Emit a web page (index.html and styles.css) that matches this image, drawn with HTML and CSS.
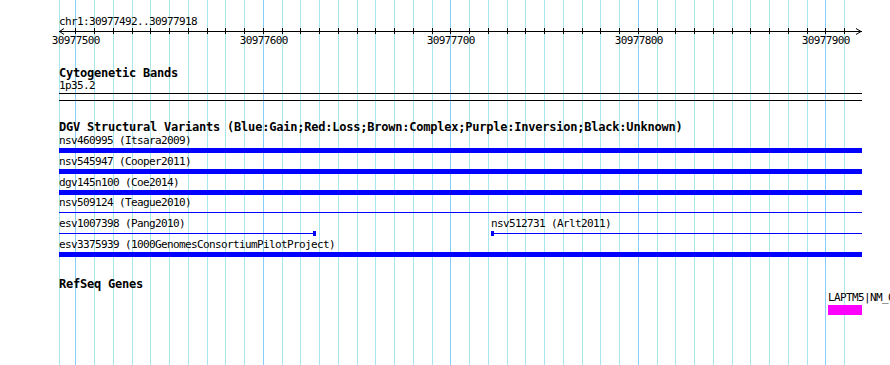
FILE: index.html
```html
<!DOCTYPE html>
<html lang="en">
<head>
    <meta charset="UTF-8">
    <title>chr1:30977492..30977918</title>
    <link rel="stylesheet" href="styles.css">
</head>
<body>
    <svg class="grid" id="grid" width="890" height="365"></svg>

    <div class="panel">
        <div class="locus">chr1:30977492..30977918</div>
        <svg class="ruler" id="ruler" width="803" height="22"></svg>

        <div class="track cyto">
            <div class="track-title">Cytogenetic Bands</div>
            <div class="band-label">1p35.2</div>
            <div class="band"></div>
        </div>

        <div class="track dgv">
            <div class="track-title">DGV Structural Variants (Blue:Gain;Red:Loss;Brown:Complex;Purple:Inversion;Black:Unknown)</div>
            <div class="row">
                <div class="feat" style="left: 0px; width: 803px;">
                    <div class="label">nsv460995 (Itsara2009)</div>
                    <div class="glyph"></div>
                </div>
            </div>
            <div class="row">
                <div class="feat" style="left: 0px; width: 803px;">
                    <div class="label">nsv545947 (Cooper2011)</div>
                    <div class="glyph"></div>
                </div>
            </div>
            <div class="row">
                <div class="feat" style="left: 0px; width: 803px;">
                    <div class="label">dgv145n100 (Coe2014)</div>
                    <div class="glyph"></div>
                </div>
            </div>
            <div class="row">
                <div class="feat" style="left: 0px; width: 803px;">
                    <div class="label">nsv509124 (Teague2010)</div>
                    <div class="glyph thin"></div>
                </div>
            </div>
            <div class="row">
                <div class="feat" style="left: 0px; width: 257px;">
                    <div class="label">esv1007398 (Pang2010)</div>
                    <div class="glyph thin end-right"><span class="block"></span></div>
                </div>
                <div class="feat" style="left: 432px; width: 371px;">
                    <div class="label">nsv512731 (Arlt2011)</div>
                    <div class="glyph thin"><span class="block"></span></div>
                </div>
            </div>
            <div class="row">
                <div class="feat" style="left: 0px; width: 803px;">
                    <div class="label">esv3375939 (1000GenomesConsortiumPilotProject)</div>
                    <div class="glyph"></div>
                </div>
            </div>
        </div>

        <div class="track refseq">
            <div class="track-title">RefSeq Genes</div>
            <div class="gene-row">
                <div class="feat" style="left: 769px; width: 34px;">
                    <div class="label">LAPTM5|NM_006762</div>
                    <div class="gene"></div>
                </div>
            </div>
        </div>
    </div>

    <script>
        const START = 30977492;
        const SCALE = 1.875;

        function bpToX(bp) {
            return Math.floor(60.8 + (bp - START) * SCALE);
        }

        let grid = '<line class="minor" x1="59.5" y1="0" x2="59.5" y2="365"></line>';
        let ruler = '';
        for (let bp = 30977500; bp <= 30977910; bp += 10) {
            const x = bpToX(bp);
            const major = (bp % 100) === 0;
            grid += '<line class="' + (major ? 'major' : 'minor') + '" x1="' + (x + 0.5) + '" y1="0" x2="' + (x + 0.5) + '" y2="365"></line>';
            const lx = x - 59 + 0.5;
            ruler += '<line x1="' + lx + '" y1="0" x2="' + lx + '" y2="6"></line>';
            if (major) {
                ruler += '<text class="tick-label" x="' + (lx + 0.3) + '" y="16">' + bp + '</text>';
            }
        }
        ruler += '<line x1="0" y1="3.5" x2="803" y2="3.5"></line>';
        ruler += '<polyline class="arrow" points="5,0.5 0.5,3.5 5,6.5"></polyline>';
        ruler += '<polyline class="arrow" points="797,0.5 802,3.5 797,6.5"></polyline>';

        document.getElementById('grid').innerHTML = grid;
        document.getElementById('ruler').innerHTML = ruler;
    </script>
</body>
</html>
```

FILE: styles.css
```css
html, body {
    margin: 0;
    padding: 0;
    overflow: hidden;
    background-color: #fff;
}
body {
    position: relative;
    width: 890px;
    height: 365px;
    font-family: "DejaVu Sans Mono", "Liberation Mono", monospace;
    font-size: 11px;
    letter-spacing: -0.62px;
    color: #000;
}
.grid {
    position: absolute;
    left: 0;
    top: 0;
    shape-rendering: crispEdges;
}
.grid .minor {
    stroke: #a8e6ef;
    stroke-width: 1;
}
.grid .major {
    stroke: #87cefa;
    stroke-width: 1;
}
.panel {
    position: relative;
    margin-left: 59px;
    width: 803px;
    padding-top: 15px;
}
.locus {
    height: 13px;
    line-height: 13px;
    white-space: nowrap;
}
.ruler {
    display: block;
    overflow: visible;
    shape-rendering: crispEdges;
}
.ruler line {
    stroke: #000;
    stroke-width: 1;
}
.ruler .arrow {
    fill: none;
    stroke: #000;
    stroke-width: 1;
    shape-rendering: auto;
}
.tick-label {
    font-family: "DejaVu Sans Mono", "Liberation Mono", monospace;
    font-size: 11px;
    letter-spacing: -0.62px;
    text-anchor: middle;
    fill: #000;
}
.track-title {
    font-weight: bold;
    font-size: 12px;
    letter-spacing: -0.22px;
    line-height: 13px;
    height: 13px;
    white-space: nowrap;
}
.cyto {
    margin-top: 17px;
}
.band-label {
    line-height: 11px;
    height: 11px;
}
.band {
    margin-top: 2px;
    height: 6px;
    border-top: 1px solid #000;
    border-bottom: 1px solid #000;
}
.dgv {
    margin-top: 20px;
}
.row {
    position: relative;
    height: 20.8px;
}
.feat {
    position: absolute;
    top: 0;
}
.label {
    height: 13px;
    line-height: 13px;
    white-space: nowrap;
}
.glyph {
    position: relative;
    margin-top: 1px;
    height: 5px;
    background-color: #0000ff;
}
.glyph.thin {
    background-color: transparent;
}
.glyph.thin::before {
    content: "";
    position: absolute;
    left: 0;
    right: 0;
    top: 2px;
    height: 1px;
    background-color: #0000ff;
}
.glyph .block {
    position: absolute;
    left: 0;
    top: 0;
    width: 3px;
    height: 5px;
    background-color: #0000ff;
}
.glyph.end-right .block {
    left: auto;
    right: 0;
}
.refseq {
    margin-top: 19.5px;
}
.gene-row {
    position: relative;
    height: 30px;
}
.gene {
    margin-top: 1px;
    height: 10px;
    background-color: #ff00ff;
}
```
